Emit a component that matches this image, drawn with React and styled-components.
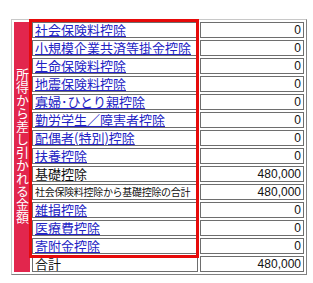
import React from 'react';
import styled, { createGlobalStyle } from 'styled-components';

const GlobalStyle = createGlobalStyle`
  html, body {
    margin: 0;
    padding: 0;
    background: #fff;
  }
  body {
    font-family: "Noto Sans CJK JP", "Noto Sans", sans-serif;
  }
`;

const Page = styled.div`
  padding: 19px 0 0 11px;
`;

const Frame = styled.div`
  position: relative;
  display: inline-block;
`;

const Table = styled.table`
  border-collapse: separate;
  border-spacing: 2px;
  border: 1px solid;
  border-color: #c8c8c8 #808080 #808080 #c8c8c8;
  font-size: 13px;
  line-height: 14px;
`;

const Side = styled.td`
  width: 16px;
  padding: 0;
  background: #e2264d;
  color: #fff;
  vertical-align: middle;
  text-align: center;
  border: 0;
`;

const SideText = styled.span`
  writing-mode: vertical-rl;
  font-size: 13px;
  line-height: 16px;
`;

const Cell = styled.td`
  height: 14px;
  padding: 0 2px;
  border: 1px solid #6e6e6e;
  white-space: nowrap;
  color: #111;
  width: ${(p) => (p.$value ? '98px' : '160px')};
  max-width: ${(p) => (p.$value ? '98px' : '160px')};
  text-align: ${(p) => (p.$value ? 'right' : 'left')};
  font-size: ${(p) => (p.$small ? '10px' : '13px')};
  letter-spacing: ${(p) => (p.$small ? '-0.3px' : '0')};
  ${(p) => p.$value && 'font-family: "Liberation Sans", Arial, sans-serif; font-size: 12px;'}
`;

const Label = styled.div`
  height: 14px;
  line-height: 14px;
`;

const Link = styled.a`
  color: #2323c4;
  text-decoration: underline;
`;

const Highlight = styled.div`
  position: absolute;
  left: 18px;
  top: 0;
  width: 170px;
  height: 239px;
  box-sizing: border-box;
  border: 3px solid #e60a0a;
  pointer-events: none;
`;

const rows = [
  { label: '社会保険料控除', value: '0', link: true },
  { label: '小規模企業共済等掛金控除', value: '0', link: true },
  { label: '生命保険料控除', value: '0', link: true },
  { label: '地震保険料控除', value: '0', link: true },
  { label: '寡婦･ひとり親控除', value: '0', link: true },
  { label: '勤労学生／障害者控除', value: '0', link: true },
  { label: '配偶者(特別)控除', value: '0', link: true },
  { label: '扶養控除', value: '0', link: true },
  { label: '基礎控除', value: '480,000' },
  { label: '社会保険料控除から基礎控除の合計', value: '480,000', small: true },
  { label: '雑損控除', value: '0', link: true },
  { label: '医療費控除', value: '0', link: true },
  { label: '寄附金控除', value: '0', link: true },
  { label: '合計', value: '480,000' },
];

const App = () => (
  <Page>
    <GlobalStyle />
    <Frame>
      <Table>
        <tbody>
          {rows.map((r, i) => (
            <tr key={i}>
              {i === 0 && (
                <Side rowSpan={rows.length}>
                  <SideText>所得から差し引かれる金額</SideText>
                </Side>
              )}
              <Cell $small={r.small}>
                <Label>{r.link ? <Link href="#">{r.label}</Link> : r.label}</Label>
              </Cell>
              <Cell $value>{r.value}</Cell>
            </tr>
          ))}
        </tbody>
      </Table>
      <Highlight />
    </Frame>
  </Page>
);

export default App;
